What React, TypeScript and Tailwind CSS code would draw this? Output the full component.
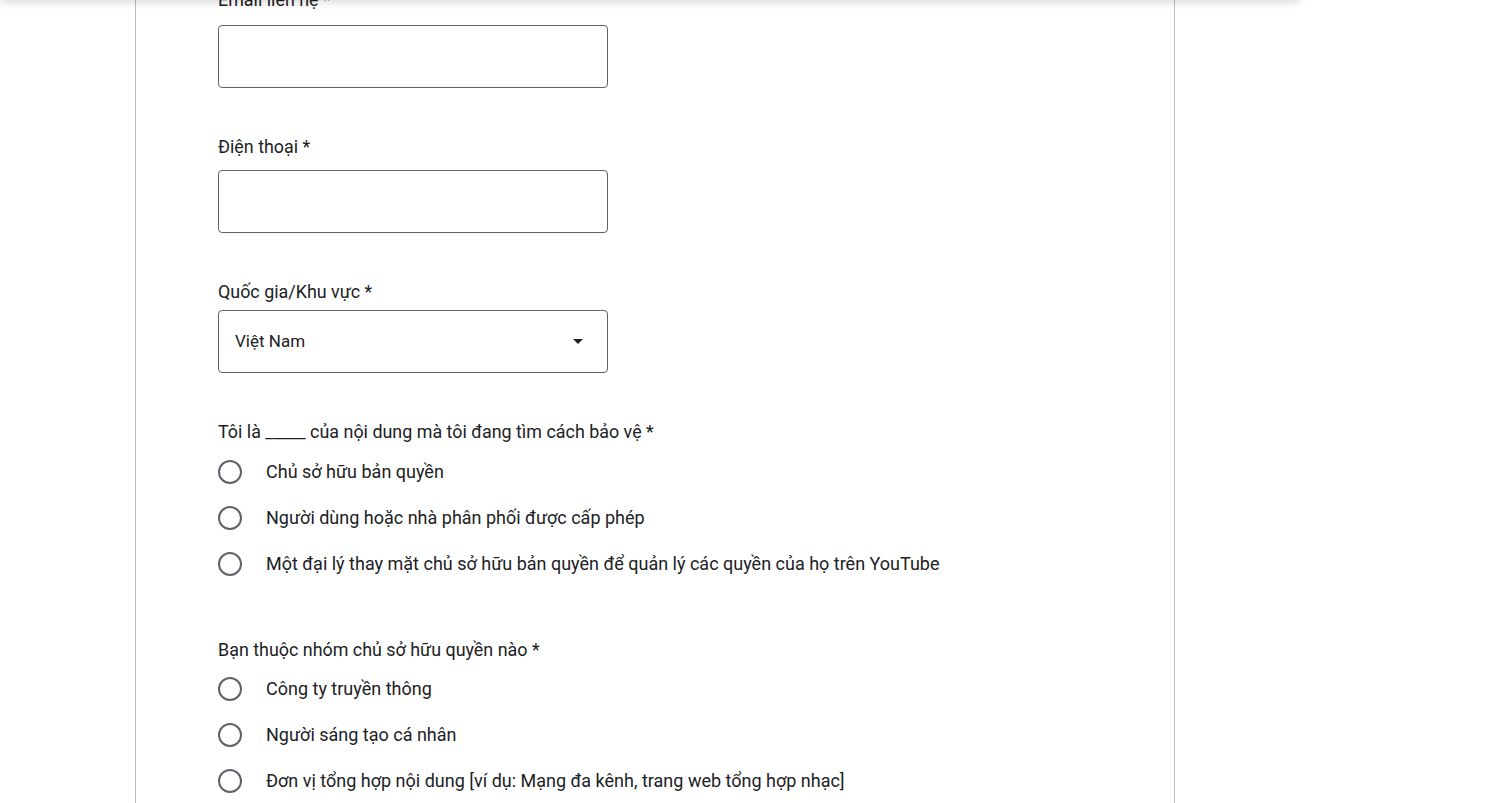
import React from "react";

const Label = ({ children, className = "" }: { children: React.ReactNode; className?: string }) => (
  <div className={`text-[17.9px] leading-[24px] text-[#202124] ${className}`}>{children}</div>
);

const Input = ({ className = "" }: { className?: string }) => (
  <div className={`w-[390px] h-[63px] border border-[#5f6368] rounded-[4px] bg-white ${className}`} />
);

const Radio = ({ label }: { label: string }) => (
  <div className="flex items-center h-[24px]">
    <div className="w-[24px] h-[24px] rounded-full border-2 border-[#5f6368] box-border shrink-0" />
    <span className="ml-[24px] text-[18px] leading-[24px] text-[#202124] whitespace-nowrap">{label}</span>
  </div>
);

export default function App() {
  return (
    <div
      className="relative w-[1493px] h-[803px] overflow-hidden bg-white"
      style={{ fontFamily: "Roboto, 'Noto Sans', Arial, sans-serif" }}
    >
      <div className="absolute left-0 top-[-10px] w-[1300px] h-[10px] bg-white shadow-[0_2px_8px_rgba(0,0,0,0.16)] z-10" />
      <div className="ml-[135px] w-[1040px] h-[860px] border-l border-r border-[#bdbdbd] pl-[82px]">
        <div className="flex flex-col mt-[-12px]">
          <Label>Email liên hệ *</Label>
          <Input className="mt-[13px]" />

          <Label className="mt-[47px]">Điện thoại *</Label>
          <Input className="mt-[11px]" />

          <Label className="mt-[47px]">Quốc gia/Khu vực *</Label>
          <div className="mt-[6px] w-[390px] h-[63px] border border-[#5f6368] rounded-[4px] flex items-center pl-[16px] pr-[24px]">
            <span className="flex-1 text-[17px] text-[#202124]">Việt Nam</span>
            <svg width="10" height="5" viewBox="0 0 10 5">
              <path d="M0 0 L10 0 L5 5 Z" fill="#202124" />
            </svg>
          </div>

          <Label className="mt-[47px]">Tôi là _____ của nội dung mà tôi đang tìm cách bảo vệ *</Label>
          <div className="flex flex-col gap-[22px] mt-[16px]">
            <Radio label="Chủ sở hữu bản quyền" />
            <Radio label="Người dùng hoặc nhà phân phối được cấp phép" />
            <Radio label="Một đại lý thay mặt chủ sở hữu bản quyền để quản lý các quyền của họ trên YouTube" />
          </div>

          <Label className="mt-[62px]">Bạn thuộc nhóm chủ sở hữu quyền nào *</Label>
          <div className="flex flex-col gap-[22px] mt-[15px]">
            <Radio label="Công ty truyền thông" />
            <Radio label="Người sáng tạo cá nhân" />
            <Radio label="Đơn vị tổng hợp nội dung [ví dụ: Mạng đa kênh, trang web tổng hợp nhạc]" />
          </div>
        </div>
      </div>
    </div>
  );
}
